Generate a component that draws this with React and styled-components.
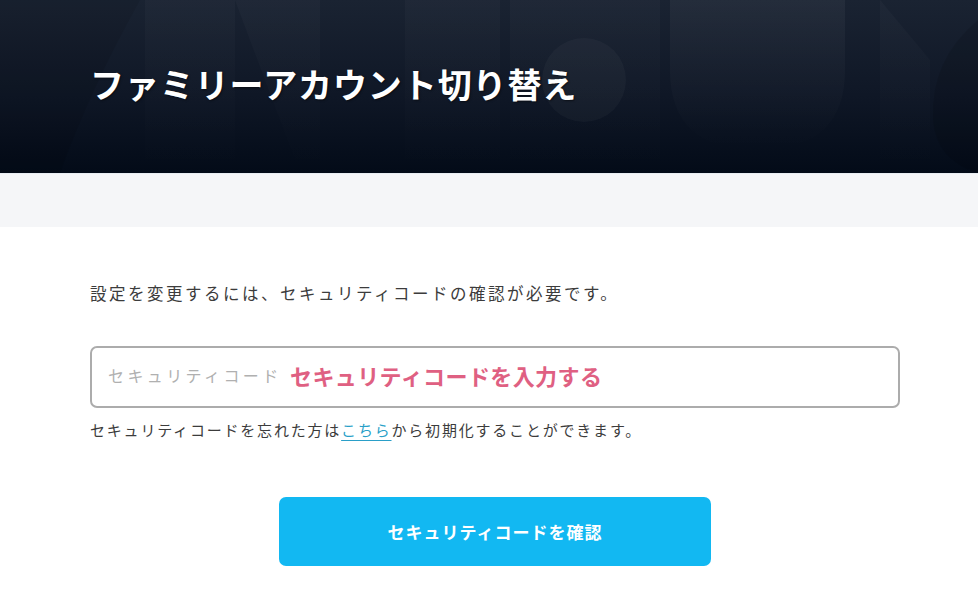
import React, { useState } from 'react';
import styled, { createGlobalStyle } from 'styled-components';

const GlobalStyle = createGlobalStyle`
    * {
        box-sizing: border-box;
    }

    body {
        margin: 0;
        background: #fff;
        font-family: 'Noto Sans CJK JP', 'Noto Sans', sans-serif;
        color: #3a3a3a;
    }
`;

// header decoration (background shapes)
const HeaderArt = () => (
    <Art viewBox="0 0 978 173" preserveAspectRatio="none" aria-hidden="true">
        <defs>
            <linearGradient id="fade" x1="0" y1="0" x2="0" y2="1">
                <stop offset="0" stopColor="#fff" stopOpacity="0.045" />
                <stop offset="1" stopColor="#fff" stopOpacity="0" />
            </linearGradient>
            <linearGradient id="fadeSoft" x1="0" y1="0" x2="0" y2="1">
                <stop offset="0" stopColor="#fff" stopOpacity="0.025" />
                <stop offset="1" stopColor="#fff" stopOpacity="0" />
            </linearGradient>
        </defs>
        <path d="M0 0 H140 Q90 90 60 173 H0 Z" fill="#000" opacity="0.08" />
        <rect x="145" y="0" width="90" height="173" fill="url(#fadeSoft)" />
        <path d="M235 0 H320 V173 H300 Z" fill="url(#fadeSoft)" />
        <rect x="405" y="0" width="95" height="173" fill="url(#fadeSoft)" />
        <rect x="510" y="0" width="150" height="173" fill="url(#fadeSoft)" />
        <circle cx="584" cy="80" r="42" fill="#fff" opacity="0.03" />
        <path d="M670 0 H845 V70 Q845 150 757 150 Q670 150 670 70 Z" fill="url(#fade)" />
        <path d="M880 0 L930 60 V173 H880 Z" fill="url(#fadeSoft)" />
        <path d="M978 20 Q930 60 933 120 Q936 160 978 173 Z" fill="#000" opacity="0.1" />
    </Art>
);

const App = () => {

    const [code, setCode] = useState('');

    return (
        <>
            <GlobalStyle />
            <Header>
                <HeaderArt />
                <Title>ファミリーアカウント切り替え</Title>
            </Header>
            <Band />
            <Content>
                <Lead>設定を変更するには、セキュリティコードの確認が必要です。</Lead>
                <Field>
                    <Input
                        type="password"
                        value={code}
                        placeholder="セキュリティコード"
                        onChange={(e) => setCode(e.target.value)}
                    />
                    {!code && <Hint>セキュリティコードを入力する</Hint>}
                </Field>
                <Note>
                    セキュリティコードを忘れた方は<a href="#reset">こちら</a>から初期化することができます。
                </Note>
                <Actions>
                    <Button type="button">セキュリティコードを確認</Button>
                </Actions>
            </Content>
        </>
    )
}

export default App;



// STYLE

const Header = styled.header `
    position: relative;
    overflow: hidden;
    height: 173px;
    display: flex;
    align-items: center;
    padding: 0 90px;
    background: linear-gradient(180deg, #1a2332 0%, #0f1726 55%, #030b18 100%);
`;

const Art = styled.svg `
    position: absolute;
    inset: 0;
    width: 100%;
    height: 100%;
`;

const Title = styled.h1 `
    position: relative;
    margin: 0 0 7px;
    font-size: 34px;
    font-weight: 700;
    letter-spacing: 0.9px;
    color: #fff;
    text-shadow: 1px 1px 2px rgba(0, 0, 0, 0.5);
`;

const Band = styled.div `
    height: 54px;
    background: #f5f6f8;
    border-top: 1px solid #e8edf2;
`;

const Content = styled.main `
    width: 810px;
    margin-left: 90px;
    padding-top: 53px;
`;

const Lead = styled.p `
    margin: 0;
    font-size: 16.5px;
    line-height: 26px;
    letter-spacing: 2.5px;
    color: #3c3c3c;
`;

const Field = styled.div `
    position: relative;
    margin-top: 40px;
`;

const Input = styled.input `
    display: block;
    width: 100%;
    height: 62px;
    padding: 0 16px 4px;
    border: 2px solid #acacac;
    border-radius: 7px;
    outline: none;
    font-family: 'Noto Sans CJK JP', sans-serif;
    font-size: 16px;
    letter-spacing: 3.4px;
    color: #333;

    &::placeholder {
        color: #b0b0b0;
    }
`;

const Hint = styled.span `
    position: absolute;
    left: 200px;
    top: 50%;
    transform: translateY(-56%);
    font-size: 22px;
    font-weight: 700;
    letter-spacing: 0.4px;
    color: #df6082;
    pointer-events: none;
`;

const Note = styled.p `
    margin: 9px 0 0;
    font-size: 15px;
    line-height: 26px;
    letter-spacing: 1.8px;
    color: #3c3c3c;

    a {
        color: #2a9fc8;
        text-decoration: underline;
        text-underline-offset: 4px;
    }
`;

const Actions = styled.div `
    display: flex;
    justify-content: center;
    margin-top: 54px;
`;

const Button = styled.button `
    width: 432px;
    height: 69px;
    border: none;
    border-radius: 7px;
    background: #12b8f2;
    color: #fff;
    font-family: 'Noto Sans CJK JP', sans-serif;
    font-size: 17px;
    font-weight: 700;
    letter-spacing: 1px;
    cursor: pointer;
`;
